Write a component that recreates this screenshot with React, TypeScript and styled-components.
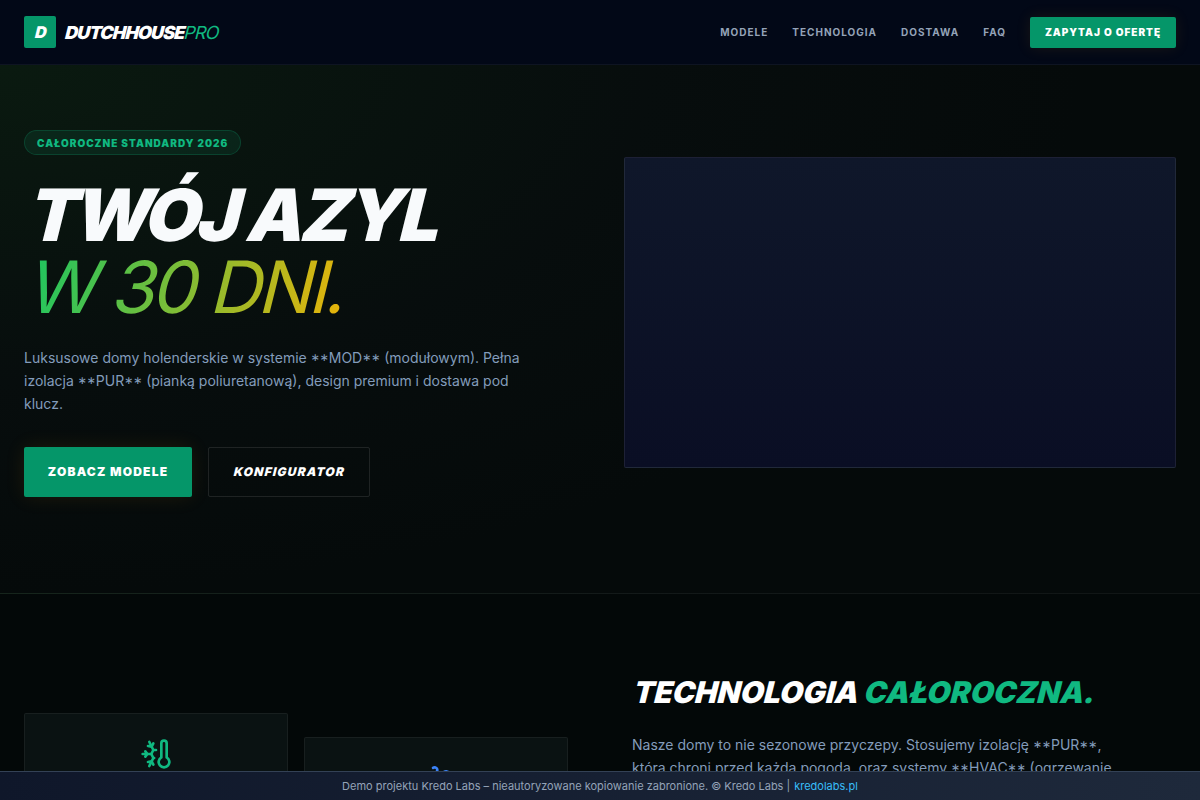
import React from 'react';
import styled, { createGlobalStyle, css } from 'styled-components';
import { ThermometerSnowflake, Wind } from 'lucide-react';

const GlobalStyle = createGlobalStyle`
  * { box-sizing: border-box; }
  html, body { margin: 0; padding: 0; }
  html { scrollbar-width: none; }
  body {
    background: #030808;
    color: #f8fafc;
    font-family: Inter, "Noto Sans", sans-serif;
    font-feature-settings: "case";
  }
`;

// the headings lean at the browser's fake-italic angle, not Inter's real italic
const leaning = css`
  display: block;
  width: max-content;
  transform: skewX(-14deg);
  transform-origin: 0 80%;
`;

const Header = styled.header`
  position: sticky;
  top: 0;
  z-index: 10;
  height: 65px;
  padding: 0 24px;
  display: flex;
  align-items: center;
  justify-content: space-between;
  background: #020817;
  border-bottom: 1px solid rgba(255, 255, 255, 0.05);
`;

const Logo = styled.a`
  display: flex;
  align-items: center;
  gap: 8px;
`;

const LogoMark = styled.span`
  width: 32px;
  height: 32px;
  display: flex;
  align-items: center;
  justify-content: center;
  background: #059669;
  border-radius: 2px;
  color: #fff;
  font-size: 16px;
  font-weight: 900;
`;

const LogoLetter = styled.span`
  ${leaning}
`;

const LogoText = styled.span`
  ${leaning}
  font-size: 18px;
  font-weight: 900;
  letter-spacing: -0.05em;
  color: #fff;
  text-transform: uppercase;
`;

const LogoAccent = styled.span`
  font-weight: 400;
  color: #10b981;
`;

const Nav = styled.nav`
  display: flex;
  align-items: center;
  gap: 24px;
`;

const NavLink = styled.a`
  font-size: 10px;
  font-weight: 700;
  letter-spacing: 0.1em;
  color: #94a3b8;
  text-transform: uppercase;
`;

const NavButton = styled.button`
  width: 146px;
  height: 31px;
  border: 0;
  border-radius: 2px;
  background: #059669;
  color: #fff;
  font-family: inherit;
  font-feature-settings: inherit;
  font-size: 10px;
  font-weight: 900;
  letter-spacing: 0.1em;
  box-shadow: 0 0 15px rgba(245, 158, 11, 0.1);
`;

const Hero = styled.section`
  display: grid;
  grid-template-columns: 1fr 1fr;
  gap: 48px;
  align-items: center;
  padding: 65px 24px 96px;
  border-bottom: 1px solid rgba(255, 255, 255, 0.05);
  background: radial-gradient(ellipse 90% 100% at 0% 0%, #0a1a10 0%, #070d0d 60%, #050a0a 100%);
`;

const HeroCopy = styled.div`
  display: flex;
  flex-direction: column;
  align-items: flex-start;
`;

const Badge = styled.span`
  height: 25px;
  display: inline-flex;
  align-items: center;
  padding: 0 12px;
  border: 1px solid rgba(16, 185, 129, 0.2);
  border-radius: 999px;
  background: rgba(16, 185, 129, 0.1);
  color: #10b981;
  font-size: 10px;
  font-weight: 900;
  letter-spacing: 0.1em;
`;

const Title = styled.h1`
  margin: 24px 0 0 2px;
  font-size: 72px;
  line-height: 1;
  font-weight: 900;
  letter-spacing: -0.05em;
  color: #f8fafc;
`;

const TitleLine = styled.span`
  ${leaning}
`;

const TitleAccent = styled.span`
  ${leaning}
  padding-right: 8px;
  font-weight: 400;
  background: linear-gradient(90deg, #22c55e, #eab308);
  -webkit-background-clip: text;
  background-clip: text;
  color: transparent;
`;

const Lead = styled.p`
  margin: 24px 0 0;
  max-width: 512px;
  font-size: 14px;
  line-height: 1.625;
  color: #839cbb;
`;

const Actions = styled.div`
  display: flex;
  gap: 16px;
  margin-top: 32px;
`;

const HeroButton = styled.button<{ $outlined?: boolean }>`
  height: 50px;
  width: ${(p) => (p.$outlined ? '162px' : '168px')};
  display: flex;
  align-items: center;
  justify-content: center;
  padding: 0 0 2px;
  border: ${(p) => (p.$outlined ? '1px solid rgba(255, 255, 255, 0.1)' : '0')};
  border-radius: 2px;
  background: ${(p) => (p.$outlined ? 'transparent' : '#059669')};
  color: #fff;
  font-family: inherit;
  font-feature-settings: inherit;
  font-size: 12px;
  font-weight: 900;
  letter-spacing: 0.1em;
  box-shadow: ${(p) => (p.$outlined ? 'none' : '0 0 20px rgba(245, 158, 11, 0.1)')};
`;

const ButtonLean = styled.span`
  ${leaning}
`;

const HeroImage = styled.div`
  aspect-ratio: 16 / 9;
  margin-bottom: 2px;
  border: 1px solid rgba(255, 255, 255, 0.08);
  border-radius: 2px;
  background: linear-gradient(180deg, #0f172a 0%, #0a0e24 100%);
`;

const TechSection = styled.section`
  display: grid;
  grid-template-columns: 1fr 1fr;
  gap: 64px;
  padding: 80px 24px 96px;
`;

const CardGrid = styled.div`
  display: grid;
  grid-template-columns: 1fr 1fr;
  gap: 16px;
  padding-top: 39px;
`;

const Card = styled.div<{ $offset?: boolean }>`
  min-height: 160px;
  margin-top: ${(p) => (p.$offset ? '24px' : '0')};
  padding: 24px;
  display: flex;
  justify-content: center;
  align-items: flex-start;
  background: #0a1212;
  border: 1px solid rgba(255, 255, 255, 0.06);
  border-radius: 2px;
`;

const TechTitle = styled.h2`
  ${leaning}
  margin: 0;
  font-size: 30px;
  line-height: 36px;
  font-weight: 900;
  color: #fff;
`;

const TechAccent = styled.span`
  color: #10b981;
`;

const TechText = styled.p`
  margin: 24px 0 0;
  max-width: 484px;
  font-size: 14px;
  line-height: 1.625;
  color: #839cbb;
`;

const Footer = styled.footer`
  position: fixed;
  left: 0;
  right: 0;
  bottom: 0;
  z-index: 20;
  height: 29px;
  display: flex;
  align-items: center;
  justify-content: center;
  gap: 4px;
  background: linear-gradient(90deg, #0f172a, #1e293b);
  border-top: 1px solid #334155;
  color: #94a3b8;
  font-size: 11px;
`;

const FooterLink = styled.a`
  color: #38bdf8;
`;

export default function App() {
  return (
    <>
      <GlobalStyle />
      <Header>
        <Logo>
          <LogoMark>
            <LogoLetter>D</LogoLetter>
          </LogoMark>
          <LogoText>
            DutchHouse<LogoAccent>Pro</LogoAccent>
          </LogoText>
        </Logo>
        <Nav>
          <NavLink>Modele</NavLink>
          <NavLink>Technologia</NavLink>
          <NavLink>Dostawa</NavLink>
          <NavLink>FAQ</NavLink>
          <NavButton>ZAPYTAJ O OFERTĘ</NavButton>
        </Nav>
      </Header>
      <Hero>
        <HeroCopy>
          <Badge>CAŁOROCZNE STANDARDY 2026</Badge>
          <Title>
            <TitleLine>TWÓJ AZYL</TitleLine>
            <TitleAccent>W 30 DNI.</TitleAccent>
          </Title>
          <Lead>
            Luksusowe domy holenderskie w systemie **MOD** (modułowym). Pełna izolacja **PUR** (pianką
            poliuretanową), design premium i dostawa pod klucz.
          </Lead>
          <Actions>
            <HeroButton>ZOBACZ MODELE</HeroButton>
            <HeroButton $outlined>
              <ButtonLean>KONFIGURATOR</ButtonLean>
            </HeroButton>
          </Actions>
        </HeroCopy>
        <HeroImage />
      </Hero>
      <TechSection>
        <CardGrid>
          <Card>
            <ThermometerSnowflake size={32} color="#10b981" />
          </Card>
          <Card $offset>
            <Wind size={32} color="#3b82f6" />
          </Card>
        </CardGrid>
        <div>
          <TechTitle>
            TECHNOLOGIA <TechAccent>CAŁOROCZNA.</TechAccent>
          </TechTitle>
          <TechText>
            Nasze domy to nie sezonowe przyczepy. Stosujemy izolację **PUR**, która chroni przed każdą
            pogodą, oraz systemy **HVAC** (ogrzewanie i chłodzenie).
          </TechText>
        </div>
      </TechSection>
      <Footer>
        Demo projektu Kredo Labs – nieautoryzowane kopiowanie zabronione. © Kredo Labs |
        <FooterLink>kredolabs.pl</FooterLink>
      </Footer>
    </>
  );
}
